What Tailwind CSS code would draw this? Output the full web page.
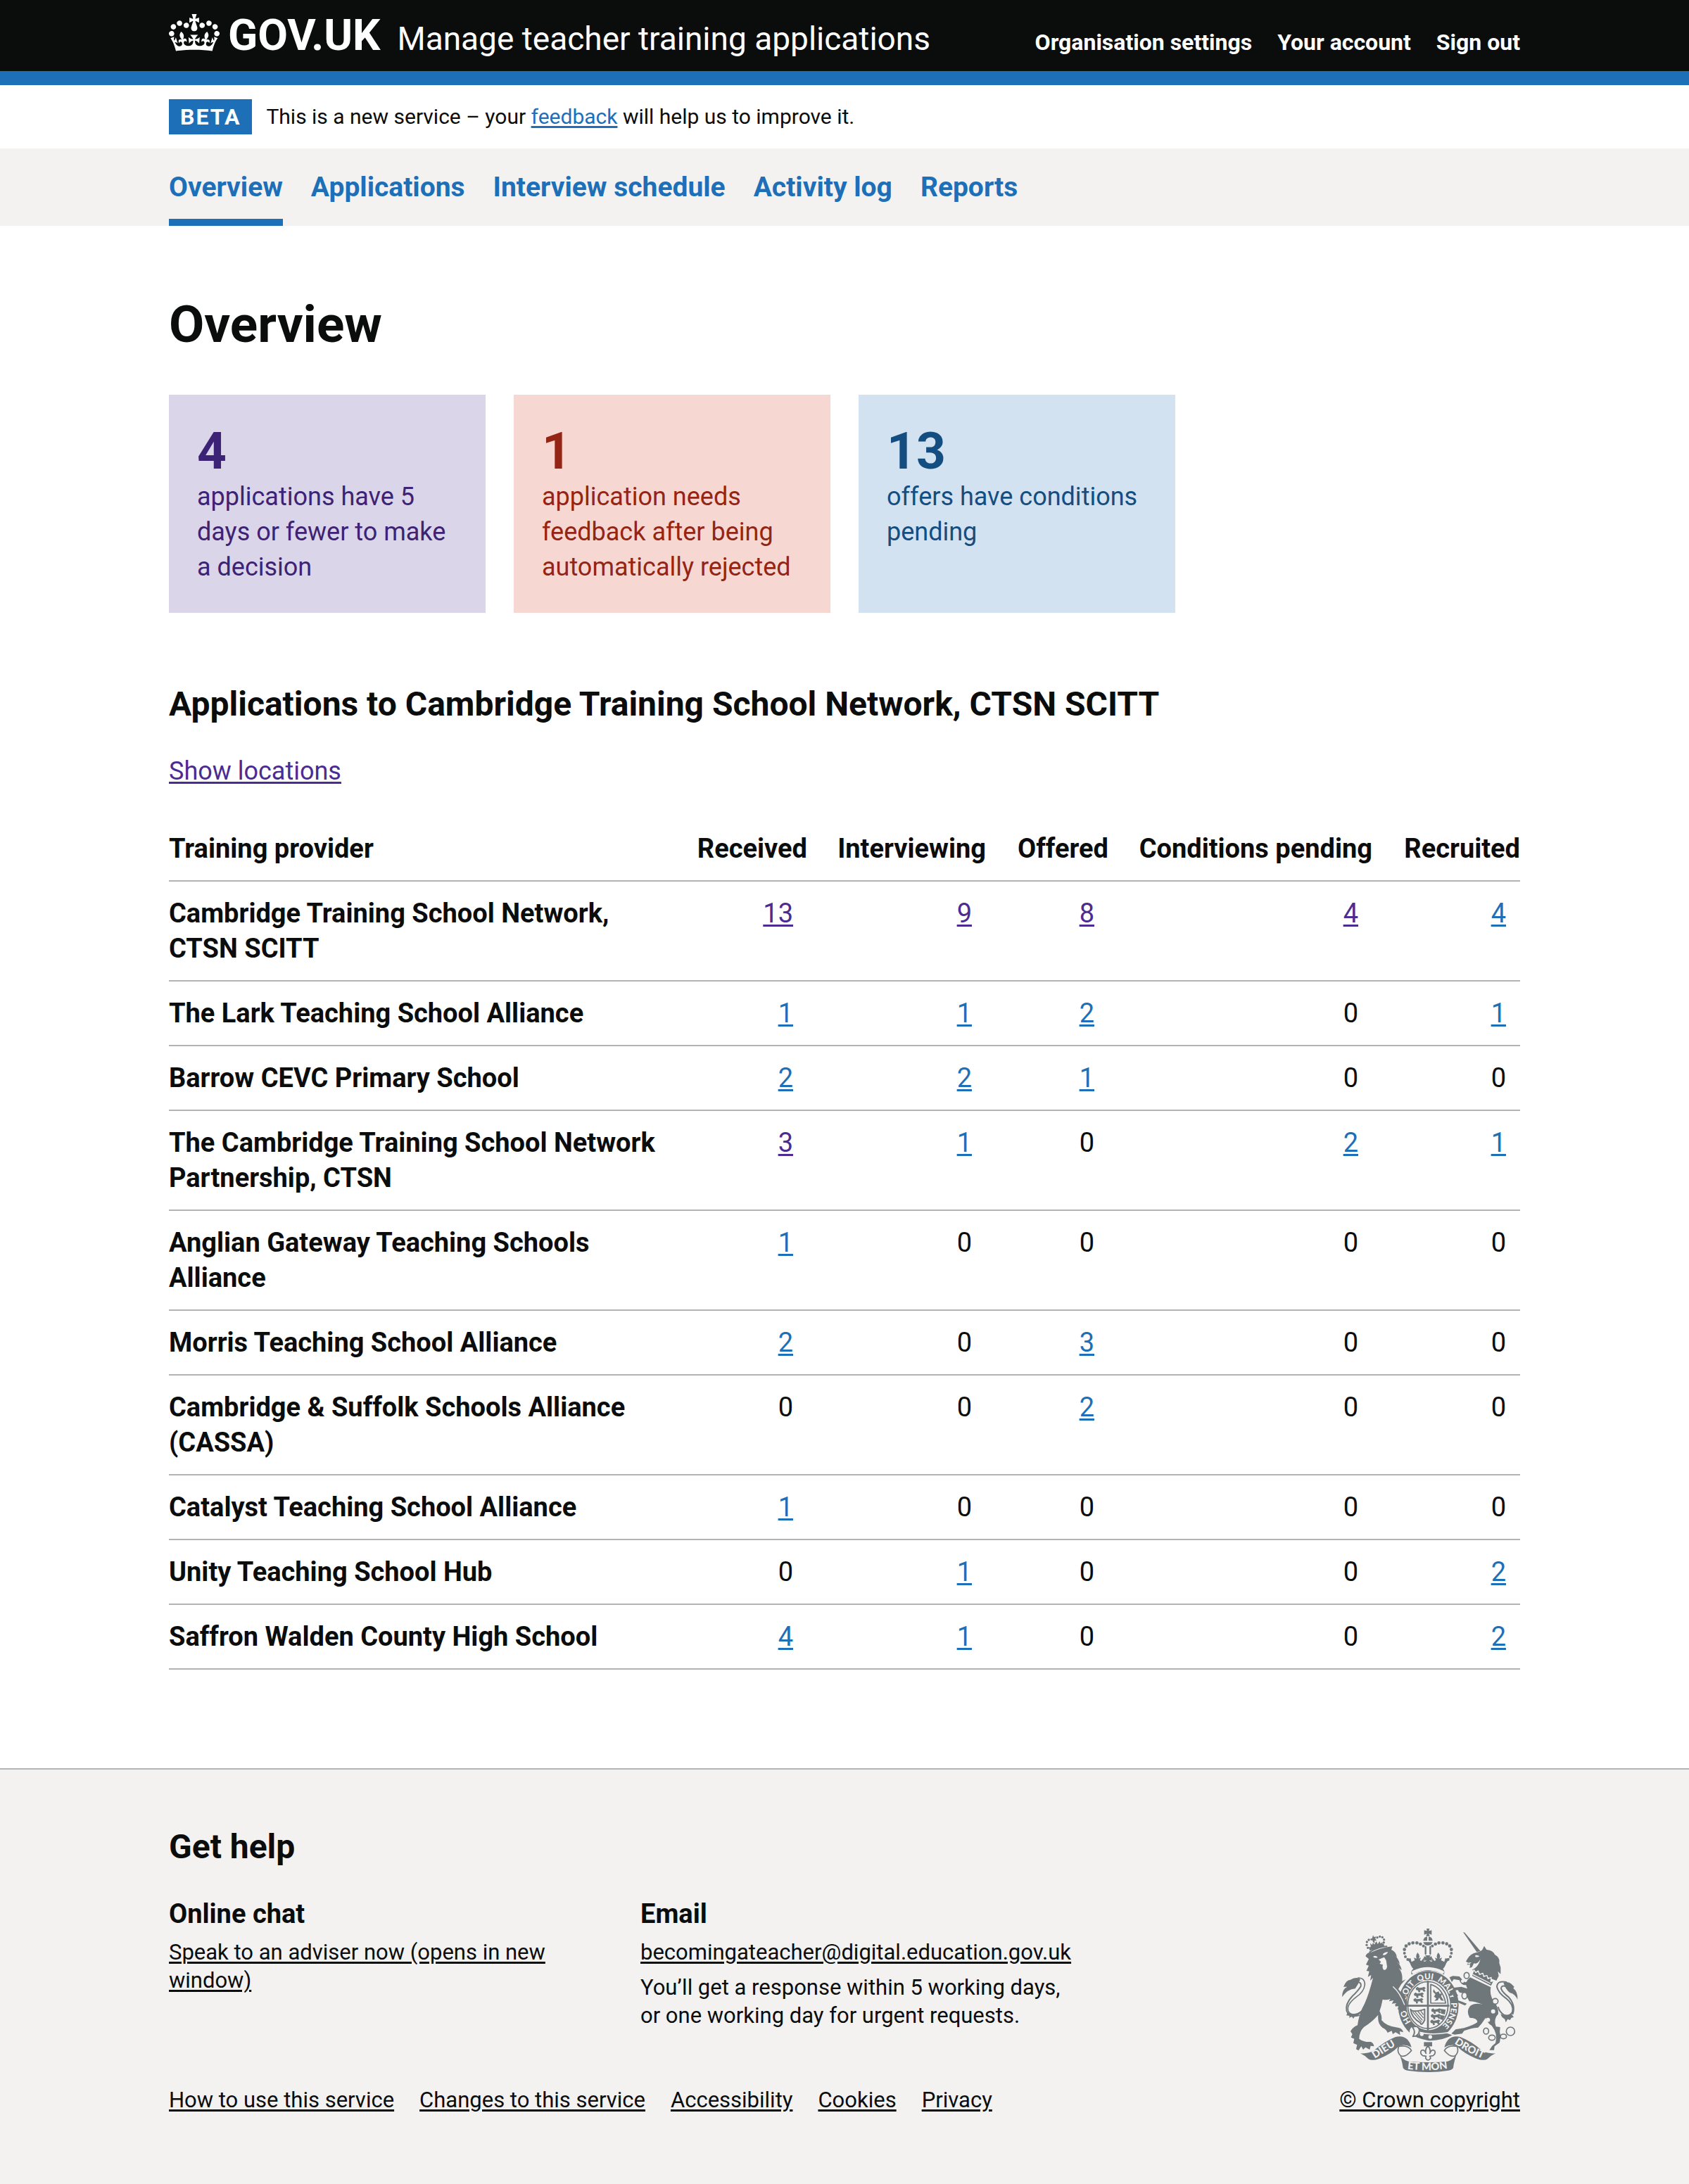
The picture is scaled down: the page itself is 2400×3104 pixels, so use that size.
<!DOCTYPE html>
<html lang="en">
<head>
<meta charset="utf-8">
<meta name="viewport" content="width=device-width, initial-scale=1">
<title>Overview - Manage teacher training applications - GOV.UK</title>
<script src="https://cdn.jsdelivr.net/npm/@tailwindcss/browser@4"></script>
</head>
<body class="flex min-h-screen flex-col bg-white font-['Roboto',sans-serif] text-[38px] leading-[50px] text-[#0b0c0c]">

<header class="border-b-[20px] border-[#1d70b8] bg-[#0b0c0c] text-white">
  <div class="mx-auto flex max-w-[1920px] flex-wrap items-baseline justify-between pt-5 pb-4">
    <a href="#" class="flex items-baseline">
      <svg class="h-[53px] w-[72px] self-start" viewBox="0 0 132 97" aria-hidden="true"><path fill="currentColor" fill-rule="evenodd" d="M25 30.2c3.5 1.5 7.7-.2 9.1-3.7 1.5-3.6-.2-7.8-3.9-9.2-3.6-1.4-7.6.3-9.1 3.9-1.4 3.5.3 7.5 3.9 9zM9 39.5c3.6 1.5 7.8-.2 9.2-3.7 1.5-3.6-.2-7.8-3.9-9.1-3.6-1.5-7.6.2-9.1 3.8-1.4 3.5.3 7.5 3.8 9zM4.4 57.2c3.5 1.5 7.7-.2 9.1-3.8 1.5-3.6-.2-7.7-3.9-9.1-3.5-1.5-7.6.3-9.1 3.8-1.4 3.5.3 7.6 3.9 9.1zm38.3-21.4c3.5 1.5 7.7-.2 9.1-3.8 1.5-3.6-.2-7.7-3.9-9.1-3.6-1.5-7.6.3-9.1 3.8-1.3 3.6.4 7.7 3.9 9.1zm64.4-5.6c-3.6 1.5-7.8-.2-9.1-3.7-1.5-3.6.2-7.8 3.8-9.2 3.6-1.4 7.7.3 9.2 3.9 1.3 3.5-.4 7.5-3.9 9zm15.9 9.3c-3.6 1.5-7.7-.2-9.1-3.7-1.5-3.6.2-7.8 3.7-9.1 3.6-1.5 7.7.2 9.2 3.8 1.5 3.5-.3 7.5-3.8 9zm4.7 17.7c-3.6 1.5-7.8-.2-9.2-3.8-1.5-3.6.2-7.7 3.9-9.1 3.6-1.5 7.7.3 9.2 3.8 1.3 3.5-.4 7.6-3.9 9.1zM89.3 35.8c-3.6 1.5-7.8-.2-9.2-3.8-1.4-3.6.2-7.7 3.9-9.1 3.6-1.5 7.7.3 9.2 3.8 1.4 3.6-.3 7.7-3.9 9.1zM69.7 17.7l8.9 4.7V9.3l-8.9 2.8c-.2-.3-.5-.6-.9-.9L72.4 0H59.6l3.5 11.2c-.3.3-.6.5-.9.9l-8.8-2.8v13.1l8.8-4.7c.3.3.6.7.9.9l-5 15.4v.1c-.2.8-.4 1.6-.4 2.4 0 4.1 3.1 7.5 7 8.1h.2c.3 0 .7.1 1 .1.4 0 .7 0 1-.1h.2c4-.6 7.1-4.1 7.1-8.1 0-.8-.1-1.7-.4-2.4V34l-5.1-15.4c.4-.2.7-.6 1-.9zM66 92.8c16.9 0 32.8 1.1 47.1 3.2 4-16.9 8.9-26.7 14-33.5l-9.6-3.4c1 4.9 1.1 7.2 0 10.2-1.5-1.4-3-4.3-4.2-8.7L108.6 76c2.8-2 5-3.2 7.5-3.3-4.4 9.4-10 11.9-13.6 11.2-4.3-.8-6.3-4.6-5.6-7.9 1-4.7 5.7-5.9 8-.5 4.3-8.7-3-11.4-7.6-8.8 7.1-7.2 7.9-13.5 2.1-21.1-8 6.1-8.1 12.3-4.5 20.8-4.7-5.4-12.1-2.5-9.5 6.2 3.4-5.2 7.9-2 7.2 3.1-.6 4.3-6.4 7.8-13.5 7.2-10.3-.9-10.9-8-11.2-13.8 2.5-.5 7.1 1.8 11 7.3L80.2 60c-4.1 4.4-8 5.3-12.3 5.4 1.4-4.4 8-11.6 8-11.6H55.5s6.4 7.2 7.9 11.6c-4.2-.1-8-1-12.3-5.4l1.4 16.4c3.9-5.5 8.5-7.7 10.9-7.3-.3 5.8-.9 12.8-11.1 13.8-7.2.6-12.9-2.9-13.5-7.2-.7-5 3.8-8.3 7.1-3.1 2.7-8.7-4.6-11.6-9.4-6.2 3.7-8.5 3.6-14.7-4.6-20.8-5.8 7.6-5 13.9 2.2 21.1-4.7-2.6-11.9.1-7.7 8.8 2.3-5.5 7.1-4.2 8.1.5.7 3.3-1.3 7.1-5.7 7.9-3.5.7-9-1.8-13.5-11.2 2.5.1 4.7 1.3 7.5 3.3l-4.7-15.4c-1.2 4.4-2.7 7.2-4.3 8.7-1.1-3-.9-5.3 0-10.2l-9.5 3.4c5 6.9 9.9 16.7 14 33.5 14.8-2.1 30.8-3.2 47.7-3.2z"/></svg>
      <span class="ml-3 text-[62px] leading-[60px] font-bold">GOV.UK</span>
      <span class="ml-6 text-[46px] leading-[60px]">Manage teacher training applications</span>
    </a>
    <nav aria-label="Account" class="flex gap-9 text-[32px] leading-[40px] font-bold">
      <a href="#">Organisation settings</a>
      <a href="#">Your account</a>
      <a href="#">Sign out</a>
    </nav>
  </div>
</header>

<div class="mx-auto flex w-full max-w-[1920px] gap-5 py-5 text-[30px]">
  <strong class="bg-[#1d70b8] px-4 text-[32px] font-bold tracking-[2px] text-white">BETA</strong>
  <p>This is a new service – your <a href="#" class="text-[#1d70b8] underline decoration-[3px] underline-offset-[3px]">feedback</a> will help us to improve it.</p>
</div>

<nav aria-label="Primary" class="bg-[#f3f2f1]">
  <div class="mx-auto flex max-w-[1920px] gap-10 text-[39px] font-bold text-[#1d70b8]">
    <a href="#" aria-current="page" class="border-b-[10px] border-[#1d70b8] pt-[30px] pb-5">Overview</a>
    <a href="#" class="pt-[30px] pb-[30px]">Applications</a>
    <a href="#" class="pt-[30px] pb-[30px]">Interview schedule</a>
    <a href="#" class="pt-[30px] pb-[30px]">Activity log</a>
    <a href="#" class="pt-[30px] pb-[30px]">Reports</a>
  </div>
</nav>

<main class="mx-auto w-full max-w-[1920px] pt-[100px] pb-[140px]">
  <h1 class="text-[73px] leading-[80px] font-bold">Overview</h1>

  <div class="mt-[60px] grid max-w-[1430px] grid-cols-3 gap-10 text-[36px]">
    <a href="#" class="bg-[#dbd5e9] p-10 text-[#3d2375]"><span class="block text-[73px] leading-[80px] font-bold">4</span>applications have 5 days or fewer to make a decision</a>
    <a href="#" class="bg-[#f6d7d2] p-10 text-[#942514]"><span class="block text-[73px] leading-[80px] font-bold">1</span>application needs feedback after being automatically rejected</a>
    <a href="#" class="bg-[#d2e2f1] p-10 text-[#144e81]"><span class="block text-[73px] leading-[80px] font-bold">13</span>offers have conditions pending</a>
  </div>

  <h2 class="mt-[100px] text-[48px] leading-[60px] font-bold">Applications to Cambridge Training School Network, CTSN SCITT</h2>
  <p class="mt-10 text-[36px]"><a href="#" class="text-[#4c2c92] underline decoration-[3px] underline-offset-[3px]">Show locations</a></p>

  <table class="mt-10 w-full table-fixed border-collapse [&_a]:underline [&_a]:decoration-[3px] [&_a]:underline-offset-[3px] [&_a]:text-[#1d70b8] [&_a.seen]:text-[#4c2c92] [&_td]:py-5 [&_td]:pr-[60px] [&_td]:text-right [&_td]:align-top [&_td:last-child]:pr-5 [&_th]:py-5 [&_th]:pr-10 [&_th]:align-top [&_th]:font-bold [&_th:last-child]:pr-0 [&_tr]:border-b-2 [&_tr]:border-[#b1b4b6]">
    <colgroup>
      <col><col class="w-[198px]"><col class="w-[254px]"><col class="w-[174px]"><col class="w-[375px]"><col class="w-[170px]">
    </colgroup>
    <thead>
      <tr class="whitespace-nowrap"><th scope="col" class="text-left">Training provider</th><th scope="col" class="text-right">Received</th><th scope="col" class="text-right">Interviewing</th><th scope="col" class="text-right">Offered</th><th scope="col" class="text-right">Conditions pending</th><th scope="col" class="text-right">Recruited</th></tr>
    </thead>
    <tbody class="[&_th]:text-left">
      <tr><th scope="row">Cambridge Training School Network, CTSN SCITT</th><td><a class="seen" href="#">13</a></td><td><a class="seen" href="#">9</a></td><td><a class="seen" href="#">8</a></td><td><a class="seen" href="#">4</a></td><td><a href="#">4</a></td></tr>
      <tr><th scope="row">The Lark Teaching School Alliance</th><td><a href="#">1</a></td><td><a href="#">1</a></td><td><a href="#">2</a></td><td>0</td><td><a href="#">1</a></td></tr>
      <tr><th scope="row">Barrow CEVC Primary School</th><td><a href="#">2</a></td><td><a href="#">2</a></td><td><a href="#">1</a></td><td>0</td><td>0</td></tr>
      <tr><th scope="row">The Cambridge Training School Network Partnership, CTSN</th><td><a class="seen" href="#">3</a></td><td><a href="#">1</a></td><td>0</td><td><a href="#">2</a></td><td><a href="#">1</a></td></tr>
      <tr><th scope="row">Anglian Gateway Teaching Schools Alliance</th><td><a href="#">1</a></td><td>0</td><td>0</td><td>0</td><td>0</td></tr>
      <tr><th scope="row">Morris Teaching School Alliance</th><td><a href="#">2</a></td><td>0</td><td><a href="#">3</a></td><td>0</td><td>0</td></tr>
      <tr><th scope="row">Cambridge &amp; Suffolk Schools Alliance (CASSA)</th><td>0</td><td>0</td><td><a href="#">2</a></td><td>0</td><td>0</td></tr>
      <tr><th scope="row">Catalyst Teaching School Alliance</th><td><a href="#">1</a></td><td>0</td><td>0</td><td>0</td><td>0</td></tr>
      <tr><th scope="row">Unity Teaching School Hub</th><td>0</td><td><a href="#">1</a></td><td>0</td><td>0</td><td><a href="#">2</a></td></tr>
      <tr><th scope="row">Saffron Walden County High School</th><td><a href="#">4</a></td><td><a href="#">1</a></td><td>0</td><td>0</td><td><a href="#">2</a></td></tr>
    </tbody>
  </table>
</main>

<footer class="grow border-t-2 border-[#b1b4b6] bg-[#f3f2f1] pt-20 pb-[100px] text-[31px] leading-[40px] [&_a]:underline [&_a]:decoration-[3px] [&_a]:underline-offset-[3px]">
  <div class="mx-auto flex max-w-[1920px] items-end justify-between">
    <div>
      <h2 class="text-[48px] leading-[60px] font-bold">Get help</h2>
      <div class="mt-10 flex">
        <section class="w-[670px] pr-[90px]">
          <h3 class="text-[38px] leading-[50px] font-bold">Online chat</h3>
          <p class="mt-[10px]"><a href="#">Speak to an adviser now (opens in new window)</a></p>
        </section>
        <section>
          <h3 class="text-[38px] leading-[50px] font-bold">Email</h3>
          <p class="mt-[10px]"><a href="#">becomingateacher@digital.education.gov.uk</a></p>
          <p class="mt-[10px]">You’ll get a response within 5 working days,<br>or one working day for urgent requests.</p>
        </section>
      </div>
      <ul class="mt-20 flex gap-9">
        <li><a href="#">How to use this service</a></li>
        <li><a href="#">Changes to this service</a></li>
        <li><a href="#">Accessibility</a></li>
        <li><a href="#">Cookies</a></li>
        <li><a href="#">Privacy</a></li>
      </ul>
    </div>

    <div class="flex flex-col items-center gap-5">
      <svg class="h-[204px] w-[250px] overflow-visible" viewBox="72 60 750 612" fill="#6f777b" stroke-linecap="round" stroke-linejoin="round" role="img" aria-label="Royal coat of arms">
        <defs>
          <path id="garter" d="M440 496A97 110 0 0 1 440 276A97 110 0 0 1 440 496"/>
          <path id="dieu" d="M212 614Q262 582 318 548"/>
          <path id="droit" d="M550 550Q600 584 664 612"/>
          <path id="mon" d="M350 658Q438 670 526 656"/>
          <g id="beast"><path d="M2 6l8-6 6 5 14-2 8-3 7 6-6 5 5 8-8 2-6-7-10 1 2 7-8 2-2-8-8-2z"/></g>
        </defs>

        <!-- Garter and shield -->
        <ellipse cx="440" cy="388" rx="129" ry="147"/>
        <ellipse cx="440" cy="386" rx="93" ry="107" fill="#f3f2f1"/>
        <ellipse cx="438" cy="386" rx="86" ry="100" fill="none" stroke="#6f777b" stroke-width="5"/>
        <path d="M438 286V490M352 389H526" fill="none" stroke="#6f777b" stroke-width="8"/>
        <use href="#beast" x="384" y="308"/><use href="#beast" x="376" y="332"/><use href="#beast" x="374" y="356"/>
        <use href="#beast" x="450" y="400"/><use href="#beast" x="448" y="424"/><use href="#beast" x="446" y="448"/>
        <path d="M492 402l22 4-4 20-16-4zM490 428l20 4-8 18-12-4z"/>
        <path d="M450 298Q500 312 514 378H450Z" fill="none" stroke="#6f777b" stroke-width="5"/>
        <path d="M462 318l10 14 12-4 4 10 12-2-6 12 12 20-12-2-8-12-6 12-14 2 8-10-10-8 6-10-10-10z"/>
        <path d="M364 404Q374 420 424 404V450Q410 478 406 462Q368 440 364 404Z" fill="none" stroke="#6f777b" stroke-width="6"/>
        <path d="M374 416l36 42M384 416l30 34M396 414l22 26M408 412l10 14" fill="none" stroke="#6f777b" stroke-width="4"/>
        <g fill="#f3f2f1" font-family="Lato, sans-serif" font-weight="900" font-size="35">
          <text><textPath href="#garter" startOffset="86">HO</textPath></text>
          <text><textPath href="#garter" startOffset="184">SOIT</textPath></text>
          <text><textPath href="#garter" startOffset="280">QUI</textPath></text>
          <text><textPath href="#garter" startOffset="363">MAL</textPath></text>
          <text><textPath href="#garter" startOffset="440">Y</textPath></text>
          <text><textPath href="#garter" startOffset="477">PENSE</textPath></text>
        </g>
        <path d="M366 488Q430 520 520 504L548 514Q500 542 440 540Q390 532 362 510Z" stroke="#f3f2f1" stroke-width="5"/>
        <circle cx="382" cy="498" r="22" fill="#f3f2f1"/>
        <path d="M372 480Q396 470 402 492Q400 520 374 520Q388 500 372 480Z" fill="none" stroke="#6f777b" stroke-width="6"/>
        <circle cx="412" cy="510" r="8" fill="#f3f2f1"/><circle cx="448" cy="522" r="8" fill="#f3f2f1"/>

        <!-- Royal crown -->
        <path d="M362 208Q366 222 376 232Q364 240 368 256Q438 224 506 256Q512 240 502 232Q512 222 516 208L532 184Q522 190 512 186L508 202Q480 186 466 198L452 180L456 200H420L424 180L410 198Q394 186 368 202L364 186Q354 190 346 184Z"/>
        <path d="M376 246Q438 216 500 246" fill="none" stroke="#f3f2f1" stroke-width="13"/>
        <path d="M394 162q14 16 4 26l10-4-6 16h-18l-6-16 12 4q-6-12 4-26zM482 162q14 16 4 26l12-4-6 16h-18l-6-16 10 4q-6-12 4-26z"/>
        <path d="M426 174h24l-6 8 10-4v20l-10-4 6 8h-24l6-8-10 4v-20l10 4z"/>
        <path d="M428 138V168M448 138V168" stroke="#6f777b" stroke-width="7"/>
        <path d="M418 118H458Q454 132 438 132Q422 132 418 118ZM418 112Q420 96 435 94V112ZM458 112Q456 96 441 94V112Z"/>
        <path d="M432 60h13l-3 10 12-3v19l-12-4 4 10h-16l4-10-12 4v-19l12 3z"/>
        <g><circle cx="352" cy="192" r="6"/><circle cx="342" cy="180" r="6"/><circle cx="338" cy="165" r="6"/><circle cx="338" cy="149" r="7"/><circle cx="345" cy="134" r="7"/><circle cx="358" cy="125" r="7"/><circle cx="374" cy="121" r="7"/><circle cx="391" cy="121" r="7"/><circle cx="406" cy="126" r="7"/><circle cx="419" cy="134" r="6"/>
        <circle cx="524" cy="192" r="6"/><circle cx="534" cy="180" r="6"/><circle cx="538" cy="165" r="6"/><circle cx="538" cy="149" r="7"/><circle cx="531" cy="134" r="7"/><circle cx="518" cy="125" r="7"/><circle cx="502" cy="121" r="7"/><circle cx="485" cy="121" r="7"/><circle cx="470" cy="126" r="7"/><circle cx="457" cy="134" r="6"/></g>

        <!-- Lion -->
        <path d="M172 178Q176 162 200 160Q240 140 287 136L282 150Q302 158 306 182L294 172Q314 188 318 212L304 200Q324 216 326 238L314 228Q332 250 328 284L344 276Q324 294 312 318Q330 342 346 350L340 360L350 370V392L342 396L348 410L334 408L330 418L318 402L308 404L314 390L300 392L298 384L304 378L284 380L292 366L272 370L278 360Q262 366 245 362Q240 390 232 412Q244 436 240 450Q262 478 310 482Q330 485 333 502L318 498L320 514L300 502L288 510L284 496L266 504Q262 490 244 482Q222 465 226 428Q200 458 165 480Q145 500 145 530Q165 545 195 543Q208 550 208 562L194 560L190 576L172 566L162 576L154 562L142 580L132 574L136 556L120 548L124 530L110 524L116 510L108 498Q118 480 138 472Q144 430 158 400Q178 365 196 300L204 270L192 282L196 258L182 266L188 242L176 240L186 218L174 214L186 190Z"/>
        <path d="M204 180Q214 172 224 182Q214 188 204 180ZM246 168Q256 158 268 160Q262 172 248 174ZM228 192Q240 186 252 182L260 196L264 222Q262 238 250 236Q242 230 246 214L232 210L238 202Z" fill="#f3f2f1"/>
        <path d="M186 154L250 134" fill="none" stroke="#f3f2f1" stroke-width="5"/>
        <path d="M190 160Q230 136 262 136" fill="none" stroke="#6f777b" stroke-width="6"/>
        <path d="M186 140L250 124L252 136L190 154Z"/>
        <path d="M192 122l8 8 4-10 6 8 8-14 6 12 8-12 4 10 8-6 2 16-50 12z"/>
        <path d="M204 88l4 8 8-2-2 10 6 6-10 2 2 10-8-4-2-8-6-2 4-6z"/>
        <g><circle cx="182" cy="142" r="5"/><circle cx="177" cy="130" r="5"/><circle cx="178" cy="117" r="5"/><circle cx="186" cy="108" r="5"/><circle cx="197" cy="106" r="4"/><circle cx="222" cy="98" r="5"/><circle cx="233" cy="94" r="5"/><circle cx="244" cy="97" r="5"/><circle cx="251" cy="107" r="5"/><circle cx="250" cy="119" r="5"/></g>
        <path d="M290 308Q318 332 338 384" fill="none" stroke="#f3f2f1" stroke-width="4"/>
        <path d="M140 270Q170 270 169 300Q165 330 132 352Q90 384 98 410Q106 432 140 424Q168 405 184 370" fill="none" stroke="#6f777b" stroke-width="5"/>
        <path d="M136 288Q156 288 152 306Q140 326 116 348Q84 382 92 412Q106 440 144 430" fill="none" stroke="#6f777b" stroke-width="6"/>
        <path d="M72 352Q72 318 94 308L78 308Q90 278 108 278L120 272Q140 266 150 276Q140 300 128 316Q96 318 72 352ZM88 404Q94 424 122 424Q152 420 166 396Q158 426 126 434L120 444L114 436L102 440L104 432L90 430L94 422Z"/>

        <!-- Unicorn -->
        <path d="M588 75L595 77L662 156L646 160Z"/>
        <path d="M644 162Q664 158 670 150L678 134L688 150Q716 152 724 172Q746 184 742 206L748 226V254L736 242L740 262L730 282L708 274L626 236Q654 224 662 190Q650 214 634 208L626 224L616 228L618 214L604 214L610 206L600 200L606 190Q618 168 644 162Z"/>
        <path d="M640 174Q650 172 658 178Q648 184 640 180ZM606 206l18-2-10 8z" fill="#f3f2f1"/>
        <path d="M634 236L642 248L652 240L658 256L672 250L676 264L690 260L694 274L708 268L706 286L720 282L708 306L624 262Z" stroke="#f3f2f1" stroke-width="4"/>
        <path d="M630 256L704 294" stroke="#f3f2f1" stroke-width="4"/>
        <path d="M618 268L706 310Q700 340 716 366Q740 392 738 424Q716 446 728 478L746 480Q742 500 748 520L744 546L722 562L720 578H700L712 560L726 548Q738 510 710 474Q690 462 684 440Q668 466 652 482Q620 484 592 496L584 508L552 512L538 508L556 490L592 484Q632 472 648 460Q650 440 616 440Q600 412 618 390Q640 374 672 384Q640 370 614 370Q606 350 592 334Q570 338 566 322L552 324L566 344L560 364L584 372L604 380L596 388L578 380L556 370L546 346L540 328L548 312L580 308L606 316L600 300Q580 304 572 280L548 276L540 288L530 268L544 262L572 264L592 286Q604 294 606 280Z"/>
        <g fill="#f3f2f1"><circle cx="716" cy="413" r="9"/><circle cx="694" cy="449" r="9"/><circle cx="586" cy="284" r="7"/></g>
        <g fill="#f3f2f1" stroke="#6f777b" stroke-width="5"><ellipse cx="603" cy="260" rx="11" ry="13"/><ellipse cx="594" cy="346" rx="11" ry="14"/><circle cx="725" cy="370" r="12"/><ellipse cx="686" cy="497" rx="11" ry="13"/><ellipse cx="711" cy="525" rx="14" ry="11"/><ellipse cx="760" cy="520" rx="13" ry="10"/><circle cx="790" cy="498" r="18"/></g>
        <path d="M772 288Q734 280 732 308Q738 334 772 358Q806 386 798 416Q786 436 762 428Q742 414 738 396M770 306Q750 300 750 316Q756 332 782 352Q812 384 800 424" fill="none" stroke="#6f777b" stroke-width="6"/>
        <path d="M760 290Q782 284 794 296L806 308L802 314Q822 330 820 362Q808 338 788 334Q768 318 760 290ZM748 424Q774 438 794 424L804 438L794 440L788 450L778 446L770 460L766 446Q752 440 748 424Z"/>

        <!-- Fleur-de-lis and motto scroll -->
        <path d="M421 544H456V562H421Z"/>
        <path d="M438 560Q452 574 446 592Q454 572 466 580Q474 592 460 602L446 604L450 612Q438 630 428 612L430 604L416 602Q402 592 410 580Q422 572 430 592Q424 574 438 560Z" fill="#f3f2f1" stroke="#6f777b" stroke-width="5"/>
        <path d="M150 592Q186 594 208 580Q254 540 300 522Q352 510 368 566Q336 550 314 562Q280 596 232 614Q200 626 184 616Q168 600 150 592Z"/>
        <path d="M726 592Q690 594 668 580Q624 540 576 522Q524 510 508 566Q540 550 562 562Q596 596 644 614Q676 626 692 616Q708 600 726 592Z"/>
        <path d="M314 562Q304 586 322 602Q342 612 368 580Q354 556 314 562ZM562 562Q572 586 554 602Q534 612 508 580Q522 556 562 562Z" fill="#f3f2f1" stroke="#6f777b" stroke-width="5"/>
        <path d="M312 584Q322 616 354 626Q438 634 522 626Q554 616 564 584Q548 630 546 654Q540 664 520 666Q438 678 356 666Q338 664 332 654Q328 620 312 584Z"/>
        <g fill="#f3f2f1" font-family="Lato, sans-serif" font-weight="900" font-size="44">
          <text><textPath href="#dieu">DIEU</textPath></text>
          <text><textPath href="#droit">DROIT</textPath></text>
          <text><textPath href="#mon">ET MON</textPath></text>
        </g>
      </svg>
      <a href="#">© Crown copyright</a>
    </div>
  </div>
</footer>
</body>
</html>
